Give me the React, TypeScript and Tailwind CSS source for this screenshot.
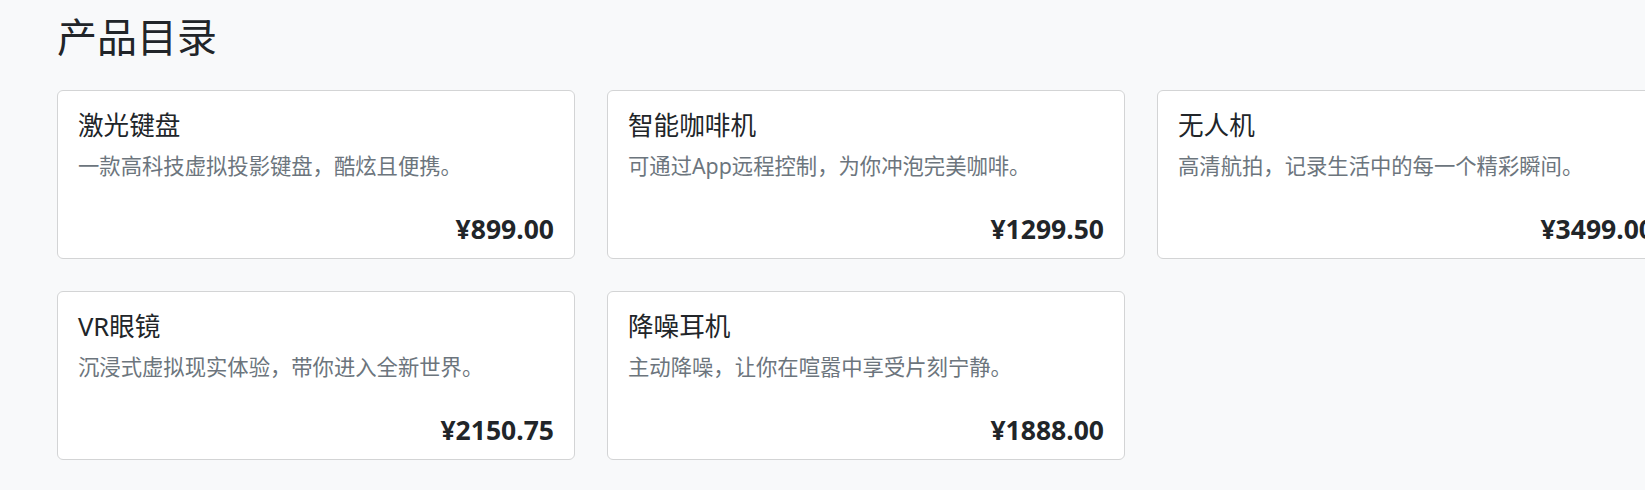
import React from 'react';

interface Product {
  name: string;
  desc: string;
  price: string;
}

const products: Product[] = [
  { name: '激光键盘', desc: '一款高科技虚拟投影键盘，酷炫且便携。', price: '¥899.00' },
  { name: '智能咖啡机', desc: '可通过App远程控制，为你冲泡完美咖啡。', price: '¥1299.50' },
  { name: '无人机', desc: '高清航拍，记录生活中的每一个精彩瞬间。', price: '¥3499.00' },
  { name: 'VR眼镜', desc: '沉浸式虚拟现实体验，带你进入全新世界。', price: '¥2150.75' },
  { name: '降噪耳机', desc: '主动降噪，让你在喧嚣中享受片刻宁静。', price: '¥1888.00' },
];

const ProductCard = ({ name, desc, price }: Product) => (
  <div className="flex h-[169px] flex-col rounded-[6px] border border-[#d3d4d5] bg-white px-5 pt-5 pb-[13px]">
    <h5 className="text-[25.6px] leading-[1.2] text-[#212529]">{name}</h5>
    <p className="mt-[8px] text-[21.33px] leading-[1.5] text-[#6c757d]">{desc}</p>
    <div className="mt-auto text-right text-[26.5px] leading-[31px] font-bold text-[#212529]">{price}</div>
  </div>
);

const App = () => {
  return (
    <div className="min-h-screen w-full overflow-hidden bg-[#f8f9fa] font-['Noto_Sans','Noto_Sans_CJK_SC',sans-serif]">
      <div className="pl-[57px] pt-[13px]">
        <h1 className="mb-[29px] text-[40px] leading-[1.2] text-[#212529]">产品目录</h1>

        {/* product grid, third column runs past the window edge */}
        <div className="grid w-max grid-cols-[repeat(3,518px)] gap-8">
          {products.map((p) => (
            <ProductCard key={p.name} {...p} />
          ))}
        </div>
      </div>
    </div>
  );
};

export default App;
